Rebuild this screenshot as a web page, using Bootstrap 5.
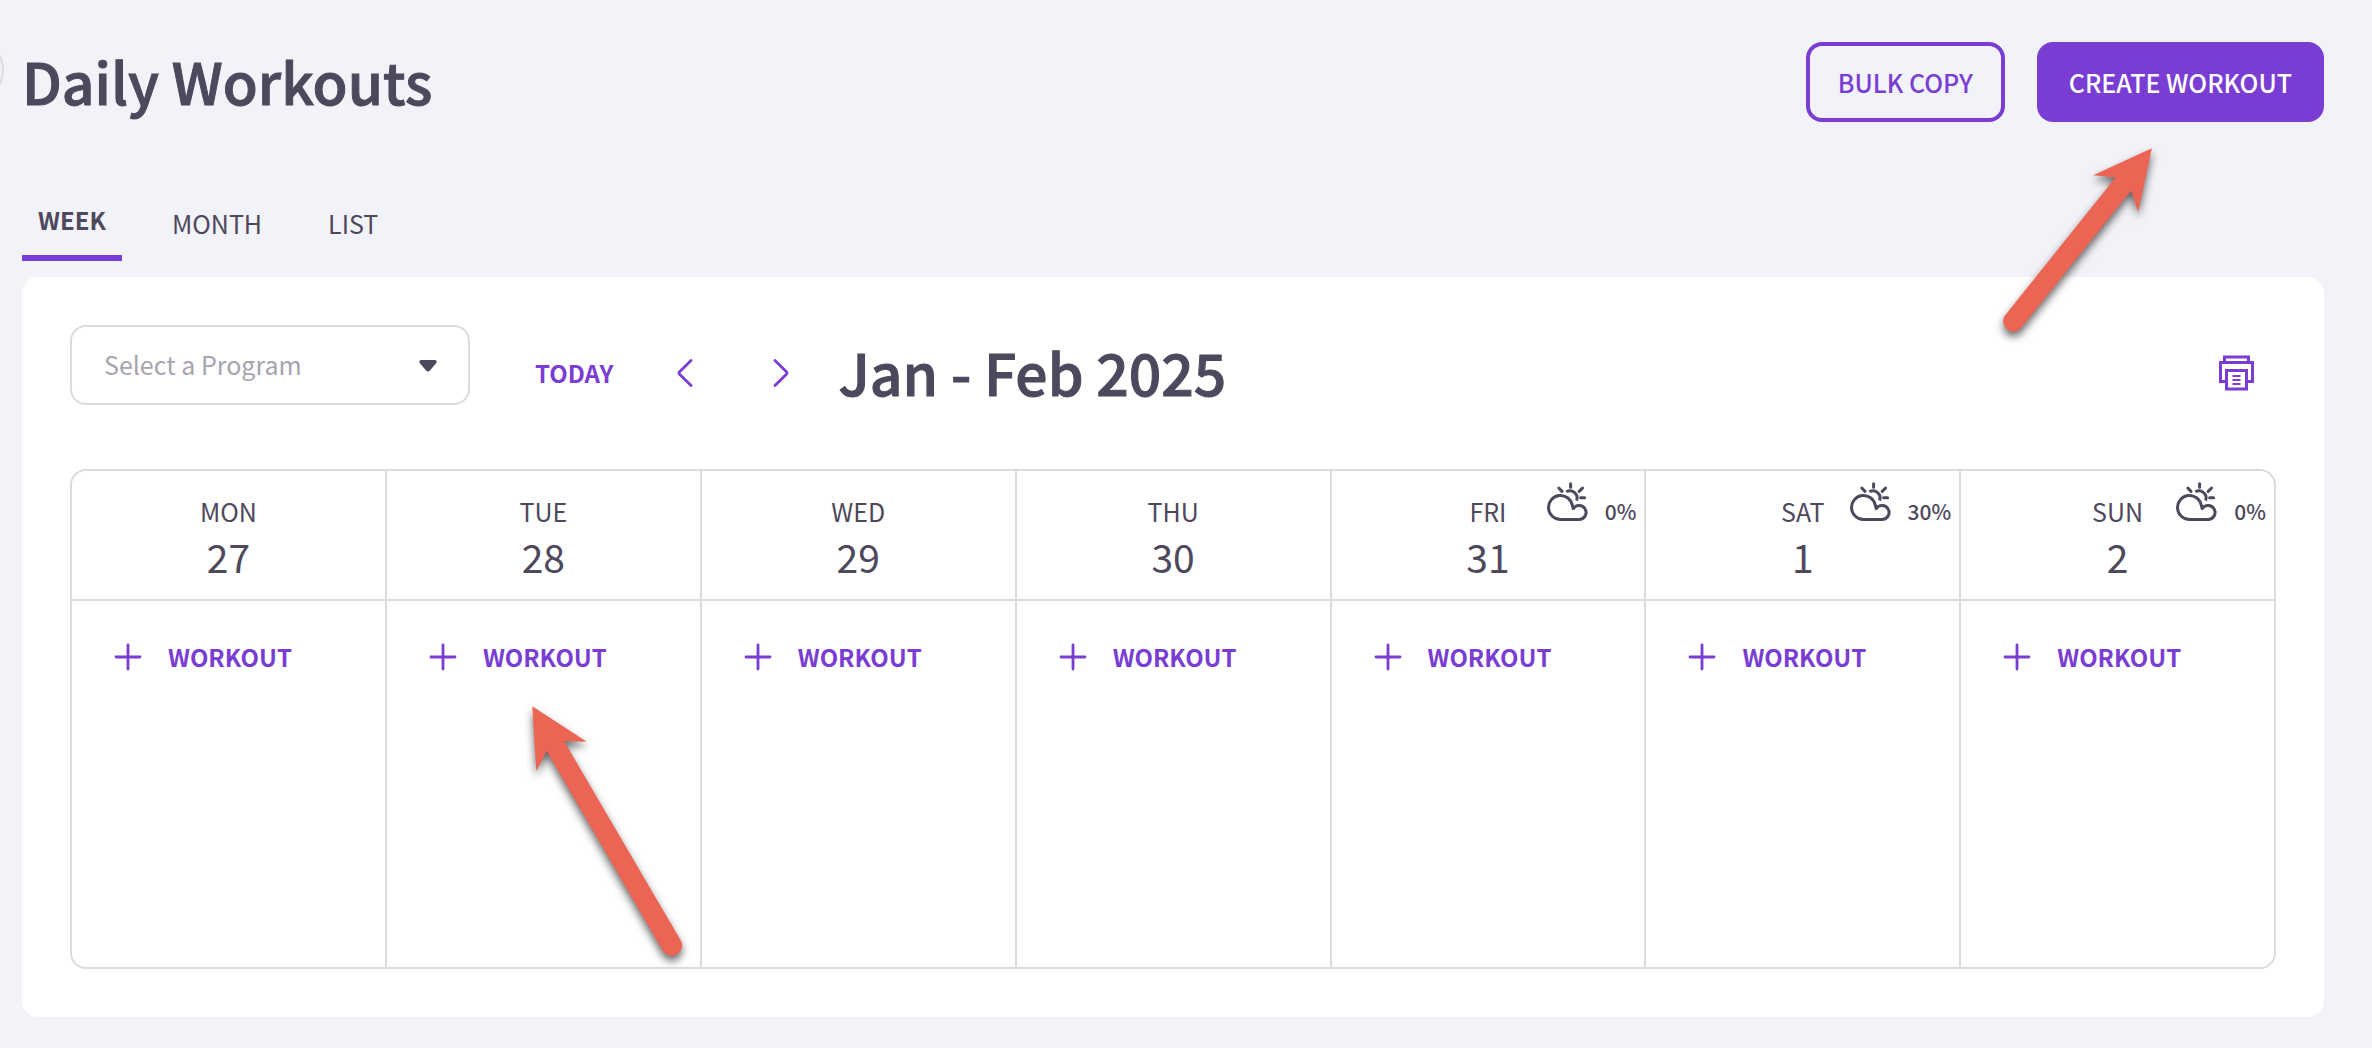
<!DOCTYPE html>
<html lang="en">
<head>
<meta charset="utf-8">
<meta name="viewport" content="width=device-width, initial-scale=1">
<title>Daily Workouts</title>
<link href="https://cdn.jsdelivr.net/npm/bootstrap@5.3.0/dist/css/bootstrap.min.css" rel="stylesheet">
<style>
  :root { --brand: #7a3dd3; --ink: #4e485c; --rule: #dbdbe0; --canvas: #f2f3f8; }
  body {
    font-family: "Noto Sans CJK SC", "Source Sans Pro", "Open Sans", sans-serif;
    font-size: 25px; line-height: 36px; color: var(--ink); background: var(--canvas);
  }
  .page { position: relative; padding: 42px 48px 28px 22px; overflow: hidden; }
  .page-title, .range-title { font-size: 57px; line-height: 76px; font-weight: 500; margin: 0; -webkit-text-stroke: 1px currentColor; }
  .side-toggle {
    position: absolute; left: -60px; top: 38px; width: 64px; height: 64px;
    border: 2px solid var(--rule); border-radius: 50%; background: transparent;
  }
  .header-actions { gap: 32px; }
  .btn {
    --bs-btn-font-size: 25px; --bs-btn-line-height: 36px; --bs-btn-font-weight: 500;
    --bs-btn-border-width: 4px; --bs-btn-border-radius: 16px;
    --bs-btn-padding-y: 18px; --bs-btn-padding-x: 28px;
  }
  .btn-brand {
    --bs-btn-color: #fff; --bs-btn-bg: var(--brand); --bs-btn-border-color: var(--brand);
    --bs-btn-hover-color: #fff; --bs-btn-hover-bg: #6930bd; --bs-btn-hover-border-color: #6930bd;
  }
  .btn-brand-outline {
    --bs-btn-color: var(--brand); --bs-btn-border-color: var(--brand);
    --bs-btn-hover-color: #fff; --bs-btn-hover-bg: var(--brand); --bs-btn-hover-border-color: var(--brand);
  }
  .btn-plain {
    --bs-btn-color: var(--brand); --bs-btn-hover-color: #6930bd;
    --bs-btn-font-size: 24px; --bs-btn-font-weight: 700;
    --bs-btn-border-width: 0; --bs-btn-padding-x: 0; --bs-btn-padding-y: 0;
  }
  .view-tabs { gap: 34px; margin-top: 68px; margin-bottom: 16px; }
  .view-tabs .nav-link { color: var(--ink); padding: 12px 16px 17px; line-height: 36px; }
  .view-tabs .nav-link.active { font-size: 24px; font-weight: 700; border-bottom: 6px solid var(--brand); }
  .panel { border-radius: 16px; padding: 48px; }
  .program-box { width: 400px; position: relative; }
  .program-box select {
    height: 80px; font-size: 25px; line-height: 36px; padding: 0 64px 2px 32px;
    border: 2px solid var(--rule); border-radius: 16px; color: #a6a4ae; background: #fff;
  }
  .program-box svg { position: absolute; right: 33px; top: 35px; pointer-events: none; }
  .toolbar { margin-bottom: 57px; }
  .toolbar-nav { margin-left: 65px; padding-top: 8px; }
  .btn-chevron { width: 48px; }
  .range-title { margin-left: 33px; padding-bottom: 3px; }
  .btn-print { margin-right: 22px; }
  .week-frame { border: 2px solid var(--rule); border-radius: 16px; overflow: hidden; }
  .week-table { width: 100%; table-layout: fixed; border-collapse: separate; border-spacing: 0; }
  .week-table th, .week-table td { padding: 0; font-weight: 400; vertical-align: top; }
  .week-table th { height: 130px; border-bottom: 2px solid var(--rule); }
  .week-table th:not(:last-child) { width: 14.3%; }
  .week-table td { height: 366px; }
  .week-table th:not(:last-child), .week-table td:not(:last-child) { border-right: 2px solid var(--rule); }
  .day-line { display: grid; grid-template-columns: 1fr auto 1fr; align-items: center; height: 54px; margin-top: 9px; }
  .day-name { grid-column: 2; padding-top: 8px; }
  .day-date { font-size: 39px; line-height: 44px; text-align: center; }
  .forecast { grid-column: 3; font-size: 21px; font-weight: 500; padding-right: 8px; gap: 16px; }
  .forecast svg { margin-bottom: 8px; overflow: visible; }
  .forecast span { padding-top: 7px; }
  .add-workout { margin: 38px 0 0 40px; gap: 24px; }
  .callouts { position: absolute; overflow: visible; pointer-events: none; filter: drop-shadow(0 5px 4px rgba(0,0,0,.6)); }
  .callout-create { right: 219px; top: 148px; }
  .callout-day { left: 532px; top: 706px; }
</style>
</head>
<body>
<svg class="d-none" aria-hidden="true">
  <symbol id="weather" viewBox="0 0 42 42">
    <g fill="none" stroke="currentColor" stroke-width="3" stroke-linecap="round" stroke-linejoin="round">
      <path d="M13.5 37.5A12 12 0 1 1 25.3 23.2L26.2 26.6A7 7 0 1 1 32 37.5Z"/>
      <path stroke-linecap="butt" d="M19.3 9.8A7.2 7.2 0 0 1 29.6 18.6"/>
      <path d="M23.6 1.8V5.2M11.8 6L15 9.4M35.6 6L32.2 9.4M33.6 15.8H37.6"/>
    </g>
  </symbol>
  <symbol id="plus" viewBox="0 0 32 32">
    <path d="M16 4V28M4 16H28" fill="none" stroke="currentColor" stroke-width="2.8" stroke-linecap="round"/>
  </symbol>
</svg>

<main class="page">
  <button class="side-toggle" type="button" aria-label="Toggle sidebar"></button>

  <header class="d-flex justify-content-between align-items-start">
    <h1 class="page-title">Daily Workouts</h1>
    <div class="header-actions d-flex">
      <button class="btn btn-brand-outline" type="button">BULK COPY</button>
      <button class="btn btn-brand" type="button">CREATE WORKOUT</button>
    </div>
  </header>

  <nav class="nav view-tabs align-items-center">
    <a class="nav-link active" aria-current="page" href="#">WEEK</a>
    <a class="nav-link" href="#">MONTH</a>
    <a class="nav-link" href="#">LIST</a>
  </nav>

  <section class="panel bg-white">
    <div class="toolbar d-flex align-items-start">
      <div class="program-box">
        <select class="form-select" aria-label="Program"><option>Select a Program</option></select>
        <svg width="18" height="12" viewBox="0 0 18 12" aria-hidden="true"><path d="M2 0H16Q18.6 .6 17.2 3L11 10.6Q9 12.6 7 10.6L.8 3Q-.6 .6 2 0Z" fill="#4e485c"/></svg>
      </div>
      <div class="toolbar-nav d-flex align-items-center flex-grow-1">
        <button class="btn btn-plain" type="button">TODAY</button>
        <button class="btn btn-plain btn-chevron ms-5" type="button" aria-label="Previous week">
          <svg class="d-block mx-auto" width="16" height="28" viewBox="0 0 16 28"><path d="M14 1.5L2.6 12.8Q1.5 14 2.6 15.2L14 26.5" fill="none" stroke="currentColor" stroke-width="2.8" stroke-linecap="round"/></svg>
        </button>
        <button class="btn btn-plain btn-chevron ms-5" type="button" aria-label="Next week">
          <svg class="d-block mx-auto" width="16" height="28" viewBox="0 0 16 28"><path d="M2 1.5L13.4 12.8Q14.5 14 13.4 15.2L2 26.5" fill="none" stroke="currentColor" stroke-width="2.8" stroke-linecap="round"/></svg>
        </button>
        <h2 class="range-title">Jan - Feb 2025</h2>
        <button class="btn btn-plain btn-print ms-auto" type="button" aria-label="Print">
          <svg class="d-block" width="36" height="36" viewBox="0 0 36 36"><g fill="none" stroke="currentColor" stroke-width="3"><path d="M6.5 7V2H30.5V7"/><path d="M8 26.5H2.5V7.5H34.5V26.5H28"/><path d="M8.5 15.5H28.5V34H8.5Z"/><path stroke-width="2" d="M14.5 21H22.5M14.5 25H22.5M14.5 29H22.5"/></g></svg>
        </button>
      </div>
    </div>

    <div class="week-frame">
      <table class="week-table">
        <thead>
          <tr>
            <th scope="col"><div class="day-line"><span class="day-name">MON</span></div><div class="day-date">27</div></th>
            <th scope="col"><div class="day-line"><span class="day-name">TUE</span></div><div class="day-date">28</div></th>
            <th scope="col"><div class="day-line"><span class="day-name">WED</span></div><div class="day-date">29</div></th>
            <th scope="col"><div class="day-line"><span class="day-name">THU</span></div><div class="day-date">30</div></th>
            <th scope="col"><div class="day-line"><span class="day-name">FRI</span><div class="forecast d-flex align-items-center justify-content-end"><svg width="42" height="42" aria-hidden="true"><use href="#weather"/></svg><span>0%</span></div></div><div class="day-date">31</div></th>
            <th scope="col"><div class="day-line"><span class="day-name">SAT</span><div class="forecast d-flex align-items-center justify-content-end"><svg width="42" height="42" aria-hidden="true"><use href="#weather"/></svg><span>30%</span></div></div><div class="day-date">1</div></th>
            <th scope="col"><div class="day-line"><span class="day-name">SUN</span><div class="forecast d-flex align-items-center justify-content-end"><svg width="42" height="42" aria-hidden="true"><use href="#weather"/></svg><span>0%</span></div></div><div class="day-date">2</div></th>
          </tr>
        </thead>
        <tbody>
          <tr>
            <td><button class="btn btn-plain add-workout d-flex align-items-center" type="button"><svg width="32" height="32" aria-hidden="true"><use href="#plus"/></svg>WORKOUT</button></td>
            <td><button class="btn btn-plain add-workout d-flex align-items-center" type="button"><svg width="32" height="32" aria-hidden="true"><use href="#plus"/></svg>WORKOUT</button></td>
            <td><button class="btn btn-plain add-workout d-flex align-items-center" type="button"><svg width="32" height="32" aria-hidden="true"><use href="#plus"/></svg>WORKOUT</button></td>
            <td><button class="btn btn-plain add-workout d-flex align-items-center" type="button"><svg width="32" height="32" aria-hidden="true"><use href="#plus"/></svg>WORKOUT</button></td>
            <td><button class="btn btn-plain add-workout d-flex align-items-center" type="button"><svg width="32" height="32" aria-hidden="true"><use href="#plus"/></svg>WORKOUT</button></td>
            <td><button class="btn btn-plain add-workout d-flex align-items-center" type="button"><svg width="32" height="32" aria-hidden="true"><use href="#plus"/></svg>WORKOUT</button></td>
            <td><button class="btn btn-plain add-workout d-flex align-items-center" type="button"><svg width="32" height="32" aria-hidden="true"><use href="#plus"/></svg>WORKOUT</button></td>
          </tr>
        </tbody>
      </table>
    </div>
  </section>

  <svg class="callouts callout-create" width="151" height="185" viewBox="0 0 151 185" aria-hidden="true">
    <path d="M149.8 .3L91.3 27.3L113.5 29.5L2.6 168A10.2 10.2 0 0 0 18.5 180.5L129 42.7L136.2 64.3Z" fill="#ec6453"/>
  </svg>
  <svg class="callouts callout-day" width="151" height="250" viewBox="0 0 151 250" aria-hidden="true">
    <path d="M.3 .3L54.7 35.7L32 35L148.5 234A10 10 0 0 1 131 245L14.7 45L4.3 65Z" fill="#ec6453"/>
  </svg>
</main>
<script src="https://cdn.jsdelivr.net/npm/bootstrap@5.3.0/dist/js/bootstrap.bundle.min.js"></script>
</body>
</html>
